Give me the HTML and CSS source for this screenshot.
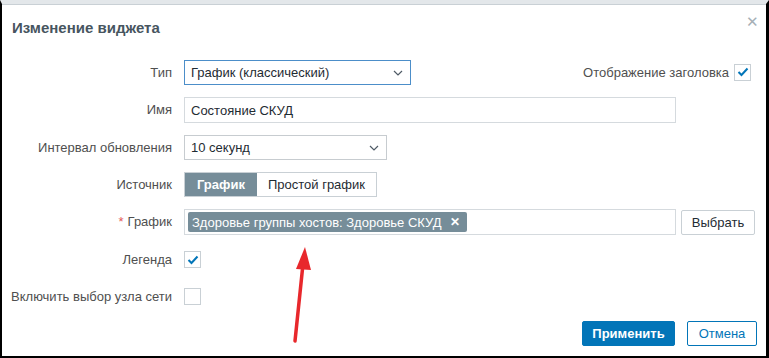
FILE: index.html
```html
<!DOCTYPE html>
<html lang="ru">
<head>
    <meta charset="UTF-8">
    <title>Изменение виджета</title>
    <link rel="stylesheet" href="styles.css">
</head>
<body>
    <div class="frame">
        <div class="dialog">
            <div class="dialog-head">
                <h2>Изменение виджета</h2>
                <span class="close">&#x2715;</span>
            </div>

            <div class="form">
                <label class="label">Тип</label>
                <div class="field field-split">
                    <div class="select select-type">
                        <span>График (классический)</span>
                        <svg class="chevron" width="10" height="6" viewBox="0 0 10 6"><polyline points="1,1 5,5 9,1" fill="none" stroke="#4f5b66" stroke-width="1.2"/></svg>
                    </div>
                    <div class="show-header">
                        <span>Отображение заголовка</span>
                        <span class="checkbox checked">
                            <svg width="12" height="10" viewBox="0 0 12 10"><polyline points="1.5,5 4.5,8 10.5,1.5" fill="none" stroke="#0275b8" stroke-width="2"/></svg>
                        </span>
                    </div>
                </div>

                <label class="label">Имя</label>
                <div class="field">
                    <div class="input input-wide">Состояние СКУД</div>
                </div>

                <label class="label">Интервал обновления</label>
                <div class="field">
                    <div class="select select-interval">
                        <span>10 секунд</span>
                        <svg class="chevron" width="10" height="6" viewBox="0 0 10 6"><polyline points="1,1 5,5 9,1" fill="none" stroke="#4f5b66" stroke-width="1.2"/></svg>
                    </div>
                </div>

                <label class="label">Источник</label>
                <div class="field">
                    <div class="segmented">
                        <span class="seg active">График</span>
                        <span class="seg">Простой график</span>
                    </div>
                </div>

                <label class="label"><span class="required">*</span> График</label>
                <div class="field field-pick">
                    <div class="input input-wide multiselect">
                        <span class="chip">Здоровье группы хостов: Здоровье СКУД <b class="chip-x">&#x2715;</b></span>
                    </div>
                    <button class="btn-alt">Выбрать</button>
                </div>

                <label class="label">Легенда</label>
                <div class="field">
                    <span class="checkbox checked">
                        <svg width="12" height="10" viewBox="0 0 12 10"><polyline points="1.5,5 4.5,8 10.5,1.5" fill="none" stroke="#0275b8" stroke-width="2"/></svg>
                    </span>
                </div>

                <label class="label">Включить выбор узла сети</label>
                <div class="field">
                    <span class="checkbox"></span>
                </div>
            </div>

            <div class="dialog-foot">
                <button class="btn-primary">Применить</button>
                <button class="btn-cancel">Отмена</button>
            </div>

            <!-- annotation arrow drawn over the form -->
            <svg class="arrow" width="40" height="110" viewBox="0 0 40 110">
                <line x1="13" y1="97" x2="21" y2="20" stroke="#e8282c" stroke-width="3.5" stroke-linecap="round"/>
                <polygon points="23,3 14,25 29,26" fill="#e8282c"/>
            </svg>
        </div>
    </div>
</body>
</html>
```

FILE: styles.css
```css
* {
    box-sizing: border-box;
}

body {
    margin: 0;
    font-family: "Liberation Sans", Arial, sans-serif;
    font-size: 13px;
    color: #1f2c33;
    background: #ffffff;
}

.frame {
    width: 769px;
    height: 358px;
    border-top: 4px solid #e3e7ea;
    border-left: 2px solid #000000;
    border-right: 3px solid #000000;
    border-bottom: 2px solid #000000;
    overflow: hidden;
}

.dialog {
    position: relative;
    height: 100%;
    border-top: 1px solid #c9d0d5;
}

.dialog-head {
    display: flex;
    justify-content: space-between;
    align-items: flex-start;
    padding: 14px 10px 0 10px;
    height: 55px;
}

.dialog-head h2 {
    margin: 0;
    font-size: 15px;
    font-weight: bold;
    color: #47555f;
}

.close {
    font-size: 15px;
    color: #a6b0b7;
    margin-top: -6px;
    margin-right: -3px;
}

.form {
    display: grid;
    grid-template-columns: 170px 1fr;
    column-gap: 12px;
    row-gap: 12px;
    padding-right: 12px;
}

.label {
    display: flex;
    align-items: center;
    justify-content: flex-end;
    height: 25px;
    color: #4f4f4f;
    white-space: nowrap;
}

.required {
    color: #e45959;
    margin-right: 4px;
}

.field {
    display: flex;
    align-items: center;
    min-height: 25px;
}

.field-split {
    justify-content: space-between;
}

.select,
.input {
    display: flex;
    align-items: center;
    height: 25px;
    border: 1px solid #d5dade;
    padding: 0 6px;
    color: #1f2c33;
    background: #ffffff;
}

.select {
    justify-content: space-between;
}

.select-type {
    width: 227px;
    border-color: #4c8ec9;
}

.select-interval {
    width: 203px;
    border-color: #c7ccd0;
}

.chevron {
    margin-right: 1px;
}

.input-wide {
    width: 492px;
    height: 26px;
}

.show-header {
    display: flex;
    align-items: center;
    gap: 5px;
    color: #4f4f4f;
    margin-right: 4px;
    margin-top: -1px;
}

.checkbox {
    display: inline-flex;
    align-items: center;
    justify-content: center;
    width: 17px;
    height: 17px;
    border: 1px solid #c9d0d5;
    background: #ffffff;
}

.segmented {
    display: flex;
    border: 1px solid #c9d0d5;
    height: 25px;
}

.seg {
    display: flex;
    align-items: center;
    padding: 0 11px;
    color: #1f2c33;
}

.seg.active {
    background: #768d99;
    color: #ffffff;
    font-weight: bold;
    padding: 0 12px;
}

.field-pick {
    gap: 5px;
}

.multiselect {
    padding: 0 3px;
}

.chip {
    display: inline-flex;
    align-items: center;
    height: 20px;
    padding: 0 7px 0 4px;
    background: #768d99;
    color: #ffffff;
    border-radius: 2px;
}

.chip-x {
    margin-left: 8px;
    font-size: 12px;
}

button {
    font-family: "Liberation Sans", Arial, sans-serif;
    font-size: 13px;
    height: 25px;
    cursor: pointer;
    border-radius: 2px;
}

.btn-alt {
    width: 74px;
    background: #ffffff;
    border: 1px solid #c9d0d5;
    color: #1f2c33;
}

.dialog-foot {
    display: flex;
    justify-content: flex-end;
    gap: 12px;
    padding: 12px 9px 0 0;
}

.btn-primary {
    width: 93px;
    background: #0275b8;
    border: 1px solid #0275b8;
    color: #ffffff;
    font-weight: bold;
}

.btn-cancel {
    width: 70px;
    background: #ffffff;
    border: 1px solid #0275b8;
    color: #0275b8;
}

.arrow {
    position: absolute;
    left: 280px;
    top: 239px;
}
```
